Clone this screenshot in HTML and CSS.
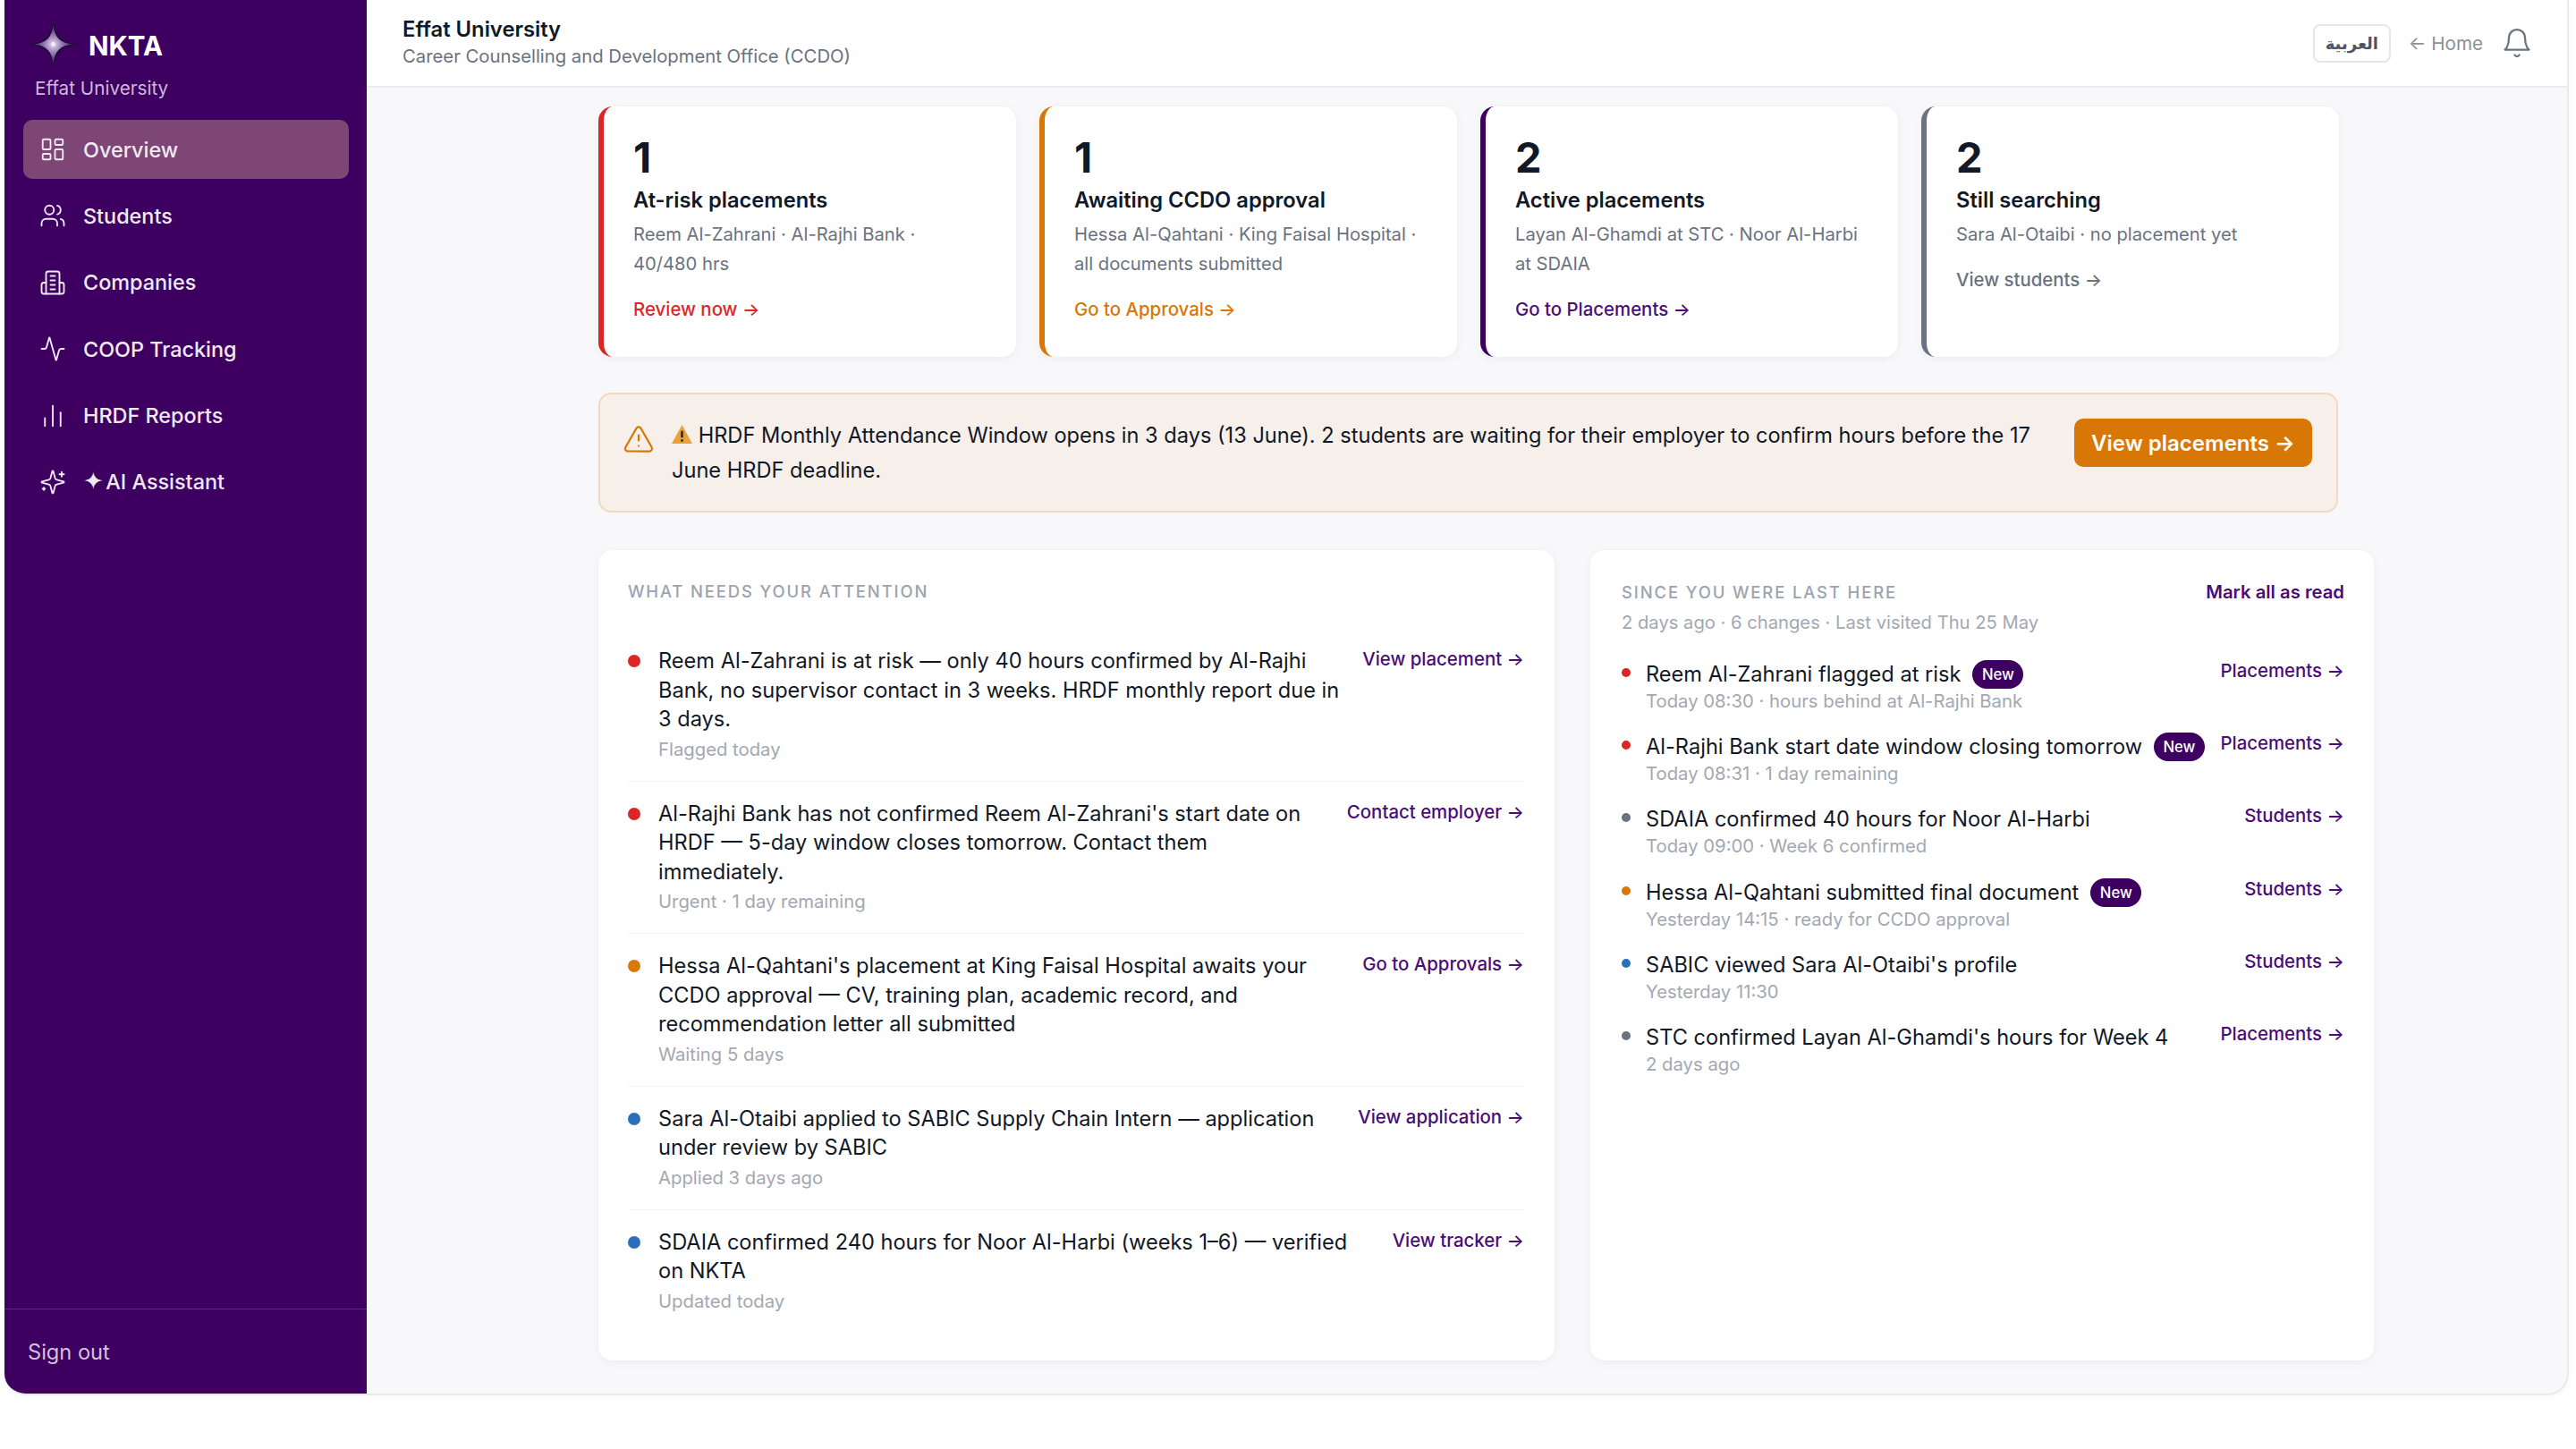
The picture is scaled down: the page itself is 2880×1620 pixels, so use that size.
FILE: index.html
```html
<!DOCTYPE html>
<html lang="en">
<head>
  <meta charset="UTF-8" />
  <title>NKTA - Overview</title>
  <link rel="stylesheet" href="styles.css">
</head>
<body>
  <div class="app">
    <aside class="sidebar">
      <div class="brand">
        <svg class="brand-star" viewBox="0 0 54 54">
          <defs>
            <radialGradient id="star-glow">
              <stop offset="0" stop-color="#e9deF2" />
              <stop offset="0.35" stop-color="#a98cc0" />
              <stop offset="0.7" stop-color="#6f4f8a" />
              <stop offset="1" stop-color="#4a2c63" />
            </radialGradient>
          </defs>
          <path d="M27 0 C29 17 37 25 54 27 C37 29 29 37 27 54 C25 37 17 29 0 27 C17 25 25 17 27 0Z" fill="#1a1033" />
          <path d="M27 5 C28.500 19 35 25.500 49 27 C35 28.500 28.500 35 27 49 C25.500 35 19 28.500 5 27 C19 25.500 25.500 19 27 5Z" fill="url(#star-glow)" />
          <circle cx="27" cy="27" r="2.500" fill="#f4edf8" />
        </svg>
        <span class="brand-name">NKTA</span>
      </div>
      <div class="brand-sub">Effat University</div>

      <nav class="nav">
        <a class="nav-item active">
          <svg class="icon" viewBox="0 0 24 24"><rect x="3" y="3" width="7" height="9" rx="1" /><rect x="14" y="3" width="7" height="5" rx="1" /><rect x="14" y="12" width="7" height="9" rx="1" /><rect x="3" y="16" width="7" height="5" rx="1" /></svg>
          Overview
        </a>
        <a class="nav-item">
          <svg class="icon" viewBox="0 0 24 24"><path d="M16 21v-2a4 4 0 0 0-4-4H6a4 4 0 0 0-4 4v2" /><circle cx="9" cy="7" r="4" /><path d="M22 21v-2a4 4 0 0 0-3-3.870" /><path d="M16 3.130a4 4 0 0 1 0 7.750" /></svg>
          Students
        </a>
        <a class="nav-item">
          <svg class="icon" viewBox="0 0 24 24"><path d="M6 22V4a2 2 0 0 1 2-2h8a2 2 0 0 1 2 2v18Z" /><path d="M6 12H4a2 2 0 0 0-2 2v6a2 2 0 0 0 2 2h2" /><path d="M18 12h2a2 2 0 0 1 2 2v6a2 2 0 0 1-2 2h-2" /><path d="M10 6h4" /><path d="M10 10h4" /><path d="M10 14h4" /><path d="M10 18h4" /></svg>
          Companies
        </a>
        <a class="nav-item">
          <svg class="icon" viewBox="0 0 24 24"><path d="M22 12h-2.480a2 2 0 0 0-1.930 1.460l-2.350 8.360a.25.25 0 0 1-.480 0L9.240 2.180a.25.25 0 0 0-.480 0l-2.350 8.360A2 2 0 0 1 4.490 12H2" /></svg>
          COOP Tracking
        </a>
        <a class="nav-item">
          <svg class="icon" viewBox="0 0 24 24"><path d="M5 21v-7" /><path d="M12 21V3" /><path d="M19 21V9" /></svg>
          HRDF Reports
        </a>
        <a class="nav-item">
          <svg class="icon" viewBox="0 0 24 24"><path d="M9.937 15.500A2 2 0 0 0 8.500 14.063l-6.135-1.582a.5.5 0 0 1 0-.962L8.500 9.936A2 2 0 0 0 9.937 8.500l1.582-6.135a.5.5 0 0 1 .963 0L14.063 8.500A2 2 0 0 0 15.500 9.937l6.135 1.581a.5.5 0 0 1 0 .964L15.500 14.063a2 2 0 0 0-1.437 1.437l-1.582 6.135a.5.5 0 0 1-.963 0z" /><path d="M20 3v4" /><path d="M22 5h-4" /><path d="M4 17v2" /><path d="M5 18H3" /></svg>
          <span><span class="spark">✦</span> AI Assistant</span>
        </a>
      </nav>

      <div class="sidebar-foot">Sign out</div>
    </aside>

    <div class="main">
      <header class="topbar">
        <div class="topbar-titles">
          <div class="org">Effat University</div>
          <div class="office">Career Counselling and Development Office (CCDO)</div>
        </div>
        <div class="topbar-actions">
          <button class="lang">العربية</button>
          <a class="home">← Home</a>
          <svg class="bell" viewBox="0 0 24 24"><path d="M6 8a6 6 0 0 1 12 0c0 7 3 9 3 9H3s3-2 3-9" /><path d="M10.300 21a1.940 1.940 0 0 0 3.400 0" /></svg>
        </div>
      </header>

      <main class="content">
        <section class="stats">
          <div class="stat stat-red">
            <div class="stat-num">1</div>
            <div class="stat-title">At-risk placements</div>
            <div class="stat-desc">Reem Al-Zahrani · Al-Rajhi Bank · 40/480 hrs</div>
            <a class="stat-link">Review now →</a>
          </div>
          <div class="stat stat-orange">
            <div class="stat-num">1</div>
            <div class="stat-title">Awaiting CCDO approval</div>
            <div class="stat-desc">Hessa Al-Qahtani · King Faisal Hospital · all documents submitted</div>
            <a class="stat-link">Go to Approvals →</a>
          </div>
          <div class="stat stat-purple">
            <div class="stat-num">2</div>
            <div class="stat-title">Active placements</div>
            <div class="stat-desc">Layan Al-Ghamdi at STC · Noor Al-Harbi at SDAIA</div>
            <a class="stat-link">Go to Placements →</a>
          </div>
          <div class="stat stat-grey">
            <div class="stat-num">2</div>
            <div class="stat-title">Still searching</div>
            <div class="stat-desc">Sara Al-Otaibi · no placement yet</div>
            <a class="stat-link">View students →</a>
          </div>
        </section>

        <section class="banner">
          <svg class="banner-icon" viewBox="0 0 24 24"><path d="m21.730 18-8-14a2 2 0 0 0-3.480 0l-8 14A2 2 0 0 0 4 21h16a2 2 0 0 0 1.730-3" /><path d="M12 9v4" /><path d="M12 17h.010" /></svg>
          <p class="banner-text"><svg class="banner-emoji" viewBox="0 0 24 24"><path d="M12 1 24 23H0Z" fill="#e8a23c" /><path d="M12 8v8M12 18v2.500" stroke="#222" stroke-width="2.500" /></svg> HRDF Monthly Attendance Window opens in 3 days (13 June). 2 students are waiting for their employer to confirm hours before the 17 June HRDF deadline.</p>
          <button class="banner-btn">View placements →</button>
        </section>

        <section class="panels">
          <div class="panel panel-attention">
            <h2 class="panel-label">WHAT NEEDS YOUR ATTENTION</h2>

            <div class="task">
              <span class="dot dot-red"></span>
              <div class="task-body">
                <div class="task-text">Reem Al-Zahrani is at risk — only 40 hours confirmed by Al-Rajhi Bank, no supervisor contact in 3 weeks. HRDF monthly report due in 3 days.</div>
                <div class="task-meta">Flagged today</div>
              </div>
              <a class="task-link">View placement →</a>
            </div>
            <div class="task">
              <span class="dot dot-red"></span>
              <div class="task-body">
                <div class="task-text">Al-Rajhi Bank has not confirmed Reem Al-Zahrani's start date on HRDF — 5-day window closes tomorrow. Contact them immediately.</div>
                <div class="task-meta">Urgent · 1 day remaining</div>
              </div>
              <a class="task-link">Contact employer →</a>
            </div>
            <div class="task">
              <span class="dot dot-orange"></span>
              <div class="task-body">
                <div class="task-text">Hessa Al-Qahtani's placement at King Faisal Hospital awaits your CCDO approval — CV, training plan, academic record, and recommendation letter all submitted</div>
                <div class="task-meta">Waiting 5 days</div>
              </div>
              <a class="task-link">Go to Approvals →</a>
            </div>
            <div class="task">
              <span class="dot dot-blue"></span>
              <div class="task-body">
                <div class="task-text">Sara Al-Otaibi applied to SABIC Supply Chain Intern — application under review by SABIC</div>
                <div class="task-meta">Applied 3 days ago</div>
              </div>
              <a class="task-link">View application →</a>
            </div>
            <div class="task">
              <span class="dot dot-blue"></span>
              <div class="task-body">
                <div class="task-text">SDAIA confirmed 240 hours for Noor Al-Harbi (weeks 1–6) — verified on NKTA</div>
                <div class="task-meta">Updated today</div>
              </div>
              <a class="task-link">View tracker →</a>
            </div>
          </div>

          <div class="panel panel-recent">
            <div class="recent-head">
              <h2 class="panel-label">SINCE YOU WERE LAST HERE</h2>
              <a class="mark-read">Mark all as read</a>
            </div>
            <div class="recent-sub">2 days ago · 6 changes · Last visited Thu 25 May</div>

            <div class="change">
              <span class="dot dot-small dot-red"></span>
              <div class="change-body">
                <div class="change-text">Reem Al-Zahrani flagged at risk <span class="badge">New</span></div>
                <div class="change-meta">Today 08:30 · hours behind at Al-Rajhi Bank</div>
              </div>
              <a class="change-link">Placements →</a>
            </div>
            <div class="change">
              <span class="dot dot-small dot-red"></span>
              <div class="change-body">
                <div class="change-text">Al-Rajhi Bank start date window closing tomorrow <span class="badge">New</span></div>
                <div class="change-meta">Today 08:31 · 1 day remaining</div>
              </div>
              <a class="change-link">Placements →</a>
            </div>
            <div class="change">
              <span class="dot dot-small dot-grey"></span>
              <div class="change-body">
                <div class="change-text">SDAIA confirmed 40 hours for Noor Al-Harbi</div>
                <div class="change-meta">Today 09:00 · Week 6 confirmed</div>
              </div>
              <a class="change-link">Students →</a>
            </div>
            <div class="change">
              <span class="dot dot-small dot-orange"></span>
              <div class="change-body">
                <div class="change-text">Hessa Al-Qahtani submitted final document <span class="badge">New</span></div>
                <div class="change-meta">Yesterday 14:15 · ready for CCDO approval</div>
              </div>
              <a class="change-link">Students →</a>
            </div>
            <div class="change">
              <span class="dot dot-small dot-blue"></span>
              <div class="change-body">
                <div class="change-text">SABIC viewed Sara Al-Otaibi's profile</div>
                <div class="change-meta">Yesterday 11:30</div>
              </div>
              <a class="change-link">Students →</a>
            </div>
            <div class="change">
              <span class="dot dot-small dot-grey"></span>
              <div class="change-body">
                <div class="change-text">STC confirmed Layan Al-Ghamdi's hours for Week 4</div>
                <div class="change-meta">2 days ago</div>
              </div>
              <a class="change-link">Placements →</a>
            </div>
          </div>
        </section>
      </main>
    </div>
  </div>
</body>
</html>
```

FILE: styles.css
```css
/* --- reset ---------------------------------------------------------- */
* {
  margin: 0;
  padding: 0;
  box-sizing: border-box;
}

:root {
  --purple: #3d0060;
  --purple-link: #4a0d78;
  --ink: #111827;
  --muted: #6b7280;
  --faint: #a3a8b2;
  --red: #dc2626;
  --orange: #d97706;
  --blue: #2a6fb8;
  --grey: #6b7280;
}

html, body {
  height: 100%;
  background: #fff;
  font-family: "Inter", "Liberation Sans", sans-serif;
  color: var(--ink);
}

a {
  text-decoration: none;
}

/* --- window --------------------------------------------------------- */
.app {
  display: flex;
  height: 1560px;
  margin: 0 8px 0 5px;
  background: #f8f8fa;
  border-radius: 0 0 24px 24px;
  border-right: 2px solid #e9e9ef;
  border-bottom: 2px solid #e9e9ef;
  box-shadow: 0 2px 8px rgba(0, 0, 0, 0.03);
  overflow: hidden;
}

/* --- sidebar -------------------------------------------------------- */
.sidebar {
  flex: none;
  width: 405px;
  display: flex;
  flex-direction: column;
  background: var(--purple);
  color: #fff;
}

.brand {
  display: flex;
  align-items: center;
  gap: 13px;
  padding: 23px 0 0 28px;
}

.brand-star {
  width: 53px;
  height: 53px;
}

.brand-name {
  padding-top: 3px;
  font-size: 29.600px;
  font-weight: 700;
}

.brand-sub {
  margin: 8px 0 0 34px;
  font-size: 20.700px;
  line-height: 30px;
  color: #cdb8dc;
}

.nav {
  display: flex;
  flex-direction: column;
  gap: 8.400px;
  margin: 20px 20px 0 21px;
}

.nav-item {
  display: flex;
  align-items: center;
  gap: 19px;
  height: 66px;
  padding-left: 18px;
  border-radius: 10px;
  font-size: 23.400px;
  font-weight: 500;
  color: #f1e9f5;
}

.nav-item.active {
  background: #7d4674;
}

.spark {
  margin-right: -4px;
  font-size: 27px;
  line-height: 1;
}

.icon {
  width: 30px;
  height: 30px;
  fill: none;
  stroke: currentColor;
  stroke-width: 1.500;
  stroke-linecap: round;
  stroke-linejoin: round;
}

.sidebar-foot {
  margin-top: auto;
  height: 95px;
  padding: 33px 0 0 26px;
  border-top: 1px solid #5a2a78;
  font-size: 23.600px;
  line-height: 30px;
  color: #d3c0dc;
}

/* --- main ----------------------------------------------------------- */
.main {
  flex: 1;
  min-width: 0;
}

.topbar {
  display: flex;
  align-items: center;
  justify-content: space-between;
  height: 98px;
  padding: 0 38px 0 40px;
  background: #fff;
  border-bottom: 2px solid #ececf0;
}

.org {
  font-size: 23.800px;
  font-weight: 600;
  line-height: 30px;
}

.office {
  font-size: 20.300px;
  line-height: 30px;
  color: var(--muted);
}

.topbar-actions {
  display: flex;
  align-items: center;
  gap: 20px;
}

.lang {
  width: 87px;
  height: 43px;
  background: #fff;
  border: 2px solid #e6e6ea;
  border-radius: 8px;
  font-family: "DejaVu Sans", sans-serif;
  font-size: 18px;
  font-weight: 700;
  color: #4b5563;
}

.home {
  font-size: 20.600px;
  color: #8b909a;
}

.bell {
  width: 36px;
  height: 36px;
  fill: none;
  stroke: var(--muted);
  stroke-width: 1.500;
  stroke-linecap: round;
  stroke-linejoin: round;
}

.content {
  padding: 21px 0 0 259px;
}

/* --- stat cards ----------------------------------------------------- */
.stats {
  display: grid;
  grid-template-columns: repeat(4, 467px);
  gap: 26px;
}

.stat {
  height: 280px;
  padding: 33px 40px 0 33px;
  background: #fff;
  border-left: 6px solid;
  border-radius: 16px;
  box-shadow: 0 2px 10px rgba(17, 24, 39, 0.05);
}

.stat-red { border-color: var(--red); }
.stat-orange { border-color: var(--orange); }
.stat-purple { border-color: var(--purple); }
.stat-grey { border-color: var(--grey); }

.stat-num {
  font-size: 46.800px;
  font-weight: 700;
  line-height: 48px;
}

.stat-title {
  margin-top: 8px;
  font-size: 23.700px;
  font-weight: 600;
  line-height: 32px;
}

.stat-desc {
  margin-top: 5px;
  font-size: 20.200px;
  line-height: 33px;
  color: var(--muted);
}

.stat-link {
  display: block;
  margin-top: 21px;
  font-size: 20.400px;
  font-weight: 500;
  line-height: 28px;
}

.stat-red .stat-link { color: var(--red); }
.stat-orange .stat-link { color: var(--orange); }
.stat-purple .stat-link { color: var(--purple-link); }
.stat-grey .stat-link { color: var(--muted); }

/* --- banner --------------------------------------------------------- */
.banner {
  display: flex;
  align-items: flex-start;
  width: 1945px;
  height: 134px;
  margin-top: 40px;
  padding: 27px 27px 0 25px;
  background: #f7efe9;
  border: 2px solid #f3d9c2;
  border-radius: 14px;
}

.banner-icon {
  flex: none;
  width: 36px;
  height: 36px;
  margin-top: 5px;
  fill: none;
  stroke: var(--orange);
  stroke-width: 1.500;
  stroke-linecap: round;
  stroke-linejoin: round;
}

.banner-text {
  flex: 1;
  margin: 0 44px 0 19px;
  font-size: 23.600px;
  line-height: 38.500px;
}

.banner-emoji {
  width: 23px;
  height: 23px;
  vertical-align: -2px;
}

.banner-btn {
  flex: none;
  width: 266px;
  height: 54px;
  background: var(--orange);
  border: 0;
  border-radius: 10px;
  font-family: inherit;
  font-size: 24px;
  font-weight: 600;
  color: #fff;
}

/* --- panels --------------------------------------------------------- */
.panels {
  display: grid;
  grid-template-columns: 1069px 876px;
  gap: 40px;
  margin-top: 42px;
}

.panel {
  height: 906px;
  padding-top: 34px;
  background: #fff;
  border-radius: 16px;
  box-shadow: 0 2px 10px rgba(17, 24, 39, 0.05);
}

.panel-attention {
  padding: 34px 34px 0 33px;
}

.panel-recent {
  padding: 34px 33px 0 35px;
}

.panel-label {
  font-size: 18.400px;
  font-weight: 500;
  line-height: 24px;
  letter-spacing: 1.900px;
  color: #9ca3af;
}

.panel-attention .panel-label {
  margin-bottom: 30px;
}

.dot {
  flex: none;
  width: 14px;
  height: 14px;
  margin-top: 9px;
  border-radius: 50%;
}

.dot-small {
  width: 10px;
  height: 10px;
}

.dot-red { background: var(--red); }
.dot-orange { background: var(--orange); }
.dot-blue { background: var(--blue); }
.dot-grey { background: var(--grey); }

.task {
  display: flex;
  gap: 20px;
  padding: 20px 0;
  border-bottom: 1px solid #f2f2f4;
}

.task:last-child {
  border-bottom: 0;
}

.task-body {
  flex: 1;
  min-width: 0;
}

.task-text {
  font-size: 23.600px;
  line-height: 32.500px;
}

.task-meta {
  margin-top: 2px;
  font-size: 20.300px;
  line-height: 30px;
  color: var(--faint);
}

.task-link {
  flex: none;
  font-size: 20.400px;
  font-weight: 500;
  line-height: 28px;
  color: var(--purple-link);
}

.recent-head {
  display: flex;
  align-items: center;
  justify-content: space-between;
}

.mark-read {
  font-size: 20.300px;
  font-weight: 600;
  color: var(--purple-link);
}

.recent-sub {
  margin: 7px 0 27px;
  font-size: 20.200px;
  line-height: 30px;
  color: var(--faint);
}

.change {
  display: flex;
  gap: 17px;
  height: 60px;
  margin-bottom: 21.200px;
}

.change-body {
  flex: 1;
  min-width: 0;
}

.change-text {
  display: flex;
  align-items: center;
  gap: 13px;
  font-size: 23.600px;
  line-height: 32px;
}

.change-meta {
  font-size: 20.300px;
  line-height: 28px;
  color: var(--faint);
}

.change-link {
  flex: none;
  font-size: 20.400px;
  font-weight: 500;
  line-height: 24px;
  color: var(--purple-link);
}

.badge {
  padding: 0 10.500px;
  background: var(--purple);
  border-radius: 16px;
  font-size: 16.700px;
  font-weight: 500;
  line-height: 32px;
  color: #fff;
}
```
